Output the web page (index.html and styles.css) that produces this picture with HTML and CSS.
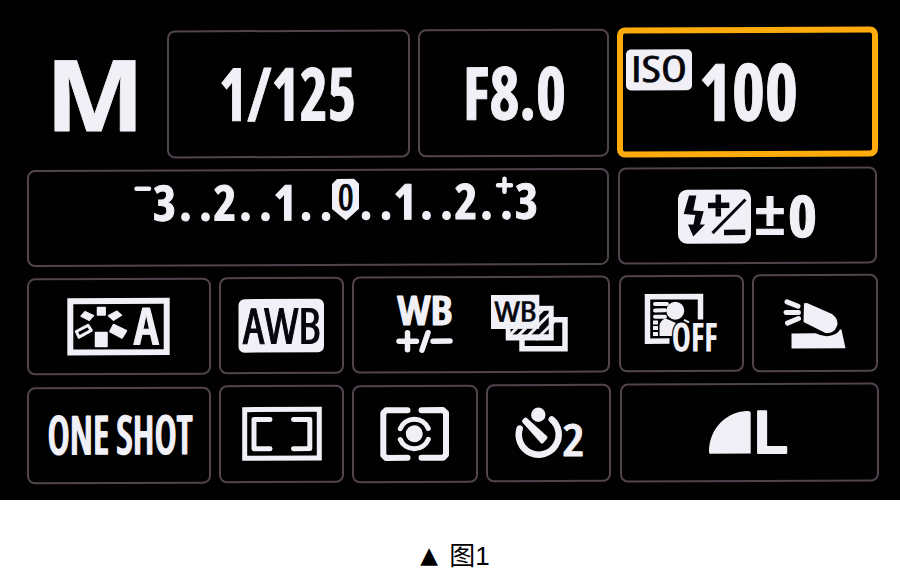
FILE: index.html
```html
<!DOCTYPE html>
<html lang="zh">
<head>
<meta charset="utf-8">
<title>Camera settings</title>
<link rel="stylesheet" href="styles.css">
</head>
<body>
<main class="screen">
  <section class="row row-main">
    <div class="mode"><svg viewBox="27 30 140 128"><text class="bold" x="95" y="131" font-size="99" text-anchor="middle" textLength="99" lengthAdjust="spacingAndGlyphs">M</text></svg></div>
    <div class="cell shutter"><svg viewBox="169 32 239 124"><text class="round" x="287.500" y="120.500" font-size="73" text-anchor="middle" textLength="137" lengthAdjust="spacingAndGlyphs">1/125</text></svg></div>
    <div class="cell aperture"><svg viewBox="420 31 187 124"><text class="round" x="514.500" y="119.500" font-size="73" text-anchor="middle" textLength="103" lengthAdjust="spacingAndGlyphs">F8.0</text></svg></div>
    <div class="cell iso active"><svg viewBox="623 33 249 118">
      <rect x="626" y="49" width="66" height="41" rx="5"/>
      <text class="ink medium" x="659" y="81.500" font-size="36" text-anchor="middle" textLength="56" lengthAdjust="spacingAndGlyphs">ISO</text>
      <text class="round" x="748.500" y="120.500" font-size="79" text-anchor="middle" textLength="99" lengthAdjust="spacingAndGlyphs">100</text>
    </svg></div>
  </section>

  <section class="row row-exposure">
    <div class="cell exposure"><svg viewBox="29 171 578 93">
      <path class="line" stroke-width="4.500" d="M136.500 188H149"/>
      <text class="scale" font-size="49" y="220" x="164.500 185.500 205.500 225 245.500 265.500 285 306 326">3..2..1..</text>
      <path d="M337 179h17l5 5v25l-13 11.500-14-11.500v-25z"/>
      <text class="ink pointer" font-size="37" x="345.700" y="210.700">0</text>
      <text class="scale" font-size="49" y="219.500" x="366 386 405 426.500 446.500 466 486.500 506.500 526.500">..1..2..3</text>
      <path class="line" stroke-width="4.500" d="M498 186h13M504.500 179.500v13"/>
    </svg></div>
    <div class="cell flash"><svg viewBox="620 168 255 93">
      <rect x="678" y="188.500" width="73" height="54" rx="9"/>
      <path class="ink" d="M689 194.300h7.300l-3 15 10.400.7-3.700 13.300h5l-11.700 12-5.300-12h5.500l1.800-9.500-11.600-1z"/>
      <path class="dark-line" stroke-width="5.500" d="M708 204.300h21.300M718.300 193.300v22M724 231.300h21.300"/>
      <path class="dark-line" stroke-width="3" d="M712.500 232L745.500 198.500"/>
      <text class="semi round" x="770" y="233.500" font-size="61" text-anchor="middle" textLength="31" lengthAdjust="spacingAndGlyphs">±</text>
      <text class="round" x="802.500" y="236.500" font-size="58" text-anchor="middle" textLength="29" lengthAdjust="spacingAndGlyphs">0</text>
    </svg></div>
  </section>

  <section class="row row-color">
    <div class="cell style"><svg viewBox="29 280 180 93">
      <rect class="frame" x="70.300" y="301" width="96.400" height="51.300" stroke-width="6"/>
      <path class="soft" d="M97.500 307.500h7.700v7.500h-7.700zM95.500 332.500h11.500v14H95.500zM81 316l4-4.500 8.500 4-4.200 4.700zM108.500 315.700l8.500-4.500 4.500 4-8 5zM113.500 324.500l13 6.300-4.500 7.300-12.200-6.600z"/>
      <path class="line" stroke-width="3" d="M76.300 331.300l11.700-6 3.300 5-12.300 6.700z"/>
      <text class="semi round" x="146.300" y="344.500" font-size="51" text-anchor="middle" textLength="25" lengthAdjust="spacingAndGlyphs">A</text>
    </svg></div>
    <div class="cell awb"><svg viewBox="221 279 121 93">
      <rect x="238.500" y="299" width="85.500" height="53.500" rx="6"/>
      <text class="ink medium heavy" x="282" y="343.500" font-size="49" text-anchor="middle" textLength="78" lengthAdjust="spacingAndGlyphs">AWB</text>
    </svg></div>
    <div class="cell shift"><svg viewBox="354 278 254 93">
      <text class="semi round heavy" x="425" y="324.500" font-size="40" text-anchor="middle" textLength="55" lengthAdjust="spacingAndGlyphs">WB</text>
      <path class="line" stroke-width="5.500" d="M399 341h17.500M407.500 332.500v17M422 350l6-17.500M433 341h17"/>
      <rect class="frame" x="522" y="320" width="43" height="29" stroke-width="5.500"/>
      <rect x="505.700" y="306" width="48" height="34.700"/>
      <rect class="ink" x="510.500" y="311" width="38.200" height="23.500"/>
      <path class="hatch" d="M507 338l10-10M516 338l10-10M526 338l24-24M536 340l18-18M537 316l8-8"/>
      <rect x="491" y="295" width="48.300" height="34"/>
      <text class="ink medium" x="515.500" y="321.700" font-size="28" text-anchor="middle" textLength="42" lengthAdjust="spacingAndGlyphs">WB</text>
    </svg></div>
    <div class="cell optimizer"><svg viewBox="621 277 121 93">
      <path class="frame" stroke-width="5.500" d="M700.500 319.500V296.500H647.500V341H669.500"/>
      <path class="line" stroke-width="4" d="M655 304h12M655 310.300h10M655 316.700h10"/>
      <path class="frame" stroke-width="4" d="M653 322.500h5M653 328h5M653 334h5"/>
      <circle cx="675.300" cy="310.700" r="9"/>
      <path d="M659.500 336v-11q1-5 6-6.500 10 4 11 5l-4 12.500z"/>
      <path class="frame" stroke-width="2" d="M684 320l5 2.500"/>
      <text class="cut" x="694.700" y="351.500" font-size="40" text-anchor="middle" textLength="46" lengthAdjust="spacingAndGlyphs">OFF</text>
    </svg></div>
    <div class="cell redeye"><svg viewBox="754 276 122 94">
      <path class="line" stroke-width="5" d="M787 301.700l11 4.500M786 312.500h12.500M787.500 323l11-4.500"/>
      <path d="M804 303.300l3-.3 25 11q8 6 4.500 13-3 7-11 6l-22-11z"/>
      <path d="M791.500 333.300h24q10 5 18 1.500 5-2 6.500-5.500l1.500.5 4 18.500h-54z"/>
    </svg></div>
  </section>

  <section class="row row-drive">
    <div class="cell af"><svg viewBox="29 389 180 93"><text class="semi round heavy" x="120" y="454" font-size="53" text-anchor="middle" textLength="145" lengthAdjust="spacingAndGlyphs">ONE SHOT</text></svg></div>
    <div class="cell area"><svg viewBox="221 387 121 94">
      <rect class="frame" x="244.700" y="409.500" width="74.600" height="48.700" stroke-width="5"/>
      <path class="line" stroke-width="5" d="M270 419.500H254V448.700H270M293.500 419.500H309.800V448.700H293.500"/>
    </svg></div>
    <div class="cell metering"><svg viewBox="354 387 122 93">
      <path class="line" stroke-width="6" d="M407.500 409.700H386L383.300 412.500V454.500L386 457.300H407.500M421.500 409.700H443L446 412.500V454.500L443 457.300H421.500"/>
      <circle cx="414.300" cy="433.300" r="8.500"/>
      <path class="line" stroke-width="5" d="M400.300 428a15 14.500 0 0 1 28 0M400.300 439a15 14.500 0 0 0 28 0"/>
    </svg></div>
    <div class="cell timer"><svg viewBox="488 386 121 94">
      <path class="line" stroke-width="6.500" d="M519.700 428.500A20 20 0 1 0 551.800 419.500"/>
      <circle cx="538.300" cy="414.700" r="7.200"/>
      <path class="hand" d="M524 421l1.500-1.500 20 18-3.500 4z"/>
      <text class="semi round" x="573.500" y="456" font-size="44" text-anchor="middle" textLength="22" lengthAdjust="spacingAndGlyphs">2</text>
    </svg></div>
    <div class="cell quality"><svg viewBox="622 385 255 95">
      <path d="M710 453.500q-1 0-1-2C709 428 727 411 748 411q2.700 0 2.700 2v40.500z"/>
      <text class="bold letter" x="770" y="453" font-size="58.500" text-anchor="middle" textLength="36" lengthAdjust="spacingAndGlyphs">L</text>
    </svg></div>
  </section>
</main>
<p class="caption"><span class="mark">▲</span> 图1</p>
</body>
</html>
```
FILE: styles.css
```css
* { box-sizing: border-box; }

body {
  margin: 0;
  background: #fff;
}

.screen {
  height: 500px;
  padding: 27px 21px 0 27px;
  background: #010102;
}

.row {
  display: flex;
  align-items: flex-start;
}

.row-main { height: 139px; }
.row-exposure { height: 108px; }
.row-color { height: 109px; }

.mode {
  width: 140px;
  height: 128px;
  margin-top: 3px;
}

.cell {
  flex: none;
  border: 2px solid #51444f;
  border-radius: 8px;
  transform: skewY(-0.22deg);
}

.cell.active {
  border: 6px solid #ffab0c;
}

.shutter { width: 243px; height: 128px; margin: 3px 8px 0 0; }
.aperture { width: 191px; height: 128px; margin: 2px 8px 0 0; }
.iso { width: 261px; height: 130px; }

.exposure { width: 582px; height: 97px; margin: 3px 9px 0 0; }
.flash { width: 259px; height: 97px; margin-top: 1px; }

.style { width: 184px; height: 97px; margin: 4px 8px 0 0; }
.awb { width: 125px; height: 97px; margin: 3px 8px 0 0; }
.shift { width: 258px; height: 97px; margin: 2px 9px 0 0; }
.optimizer { width: 125px; height: 97px; margin: 1px 8px 0 0; }
.redeye { width: 126px; height: 98px; }

.af { width: 184px; height: 97px; margin: 4px 8px 0 0; }
.area { width: 125px; height: 98px; margin: 2px 8px 0 0; }
.metering { width: 126px; height: 98px; margin: 2px 8px 0 0; }
.timer { width: 125px; height: 98px; margin: 1px 9px 0 0; }
.quality { width: 259px; height: 99px; }

svg {
  display: block;
  width: 100%;
  height: 100%;
  overflow: visible;
  fill: #f0f0f6;
}

text {
  font-family: "Open Sans", "Noto Sans", sans-serif;
  font-weight: 700;
  font-stretch: 75%;
}

.bold {
  font-stretch: 100%;
  stroke: #f0f0f6;
  stroke-width: 0.8;
  stroke-linejoin: round;
}

.letter {
  font-weight: 600;
  stroke-width: 2;
}

.medium { font-weight: 500; }
.semi { font-weight: 600; }
.ink { fill: #05050c; }

.medium.ink {
  stroke: #05050c;
  stroke-width: 0.6;
}

.scale,
.pointer { text-anchor: middle; }

.pointer {
  font-weight: 600;
  font-stretch: 87%;
}

.scale,
.round {
  stroke: #f0f0f6;
  stroke-width: 1;
  stroke-linejoin: round;
}

.round.heavy { stroke-width: 1.5; }
.medium.heavy { stroke-width: 1; }

.line,
.frame,
.dark-line {
  fill: none;
  stroke: #f0f0f6;
}

.line {
  stroke-linecap: round;
  stroke-linejoin: round;
}

.dark-line { stroke: #05050c; }

.soft {
  stroke: #f0f0f6;
  stroke-width: 1.5;
  stroke-linejoin: round;
}

.hand {
  stroke: #f0f0f6;
  stroke-width: 4;
  stroke-linejoin: round;
}

.hatch {
  fill: none;
  stroke: #f0f0f6;
  stroke-width: 3;
}

.cut {
  stroke: #010102;
  stroke-width: 3;
  paint-order: stroke;
}

.caption {
  margin: 42px 0 0 10px;
  font-family: "Liberation Sans", "Noto Sans CJK SC", sans-serif;
  font-size: 26px;
  line-height: 28px;
  text-align: center;
  word-spacing: 4px;
  color: #000;
}

.mark {
  font-family: "DejaVu Sans", sans-serif;
  font-size: 23px;
  line-height: 1;
  vertical-align: 2px;
}
```
